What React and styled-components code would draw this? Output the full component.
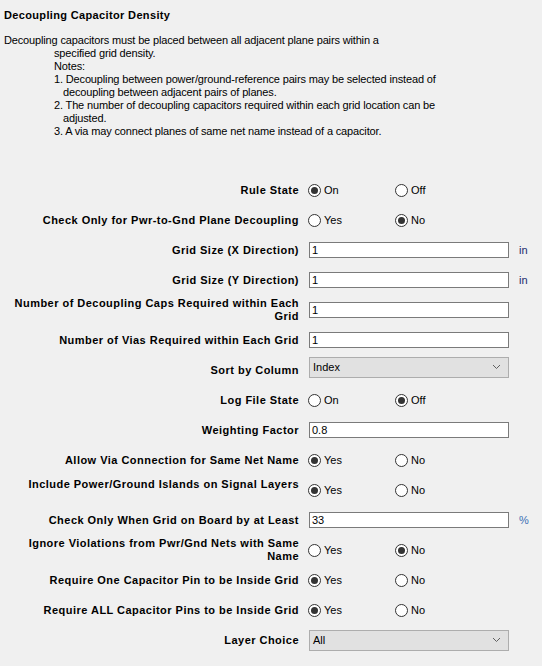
import React from "react";
import styled, { createGlobalStyle } from "styled-components";

const GlobalStyle = createGlobalStyle`
  html, body {
    margin: 0;
    padding: 0;
    background: #f0f0f0;
  }
  body {
    font-family: "Liberation Sans", Arial, sans-serif;
    font-size: 11px;
    color: #000;
  }
`;

const descLines = [
  { text: "Decoupling capacitors must be placed between all adjacent plane pairs within a", indent: 0 },
  { text: "specified grid density.", indent: 50 },
  { text: "Notes:", indent: 50 },
  { text: "1. Decoupling between power/ground-reference pairs may be selected instead of", indent: 50 },
  { text: "decoupling between adjacent pairs of planes.", indent: 59 },
  { text: "2. The number of decoupling capacitors required within each grid location can be", indent: 50 },
  { text: "adjusted.", indent: 59 },
  { text: "3. A via may connect planes of same net name instead of a capacitor.", indent: 50 },
];

const rules = [
  { label: "Rule State", type: "radio", options: ["On", "Off"], value: 0 },
  { label: "Check Only for Pwr-to-Gnd Plane Decoupling", type: "radio", options: ["Yes", "No"], value: 1 },
  { label: "Grid Size (X Direction)", type: "text", value: "1", unit: "in" },
  { label: "Grid Size (Y Direction)", type: "text", value: "1", unit: "in" },
  { label: "Number of Decoupling Caps Required within Each Grid", type: "text", value: "1" },
  { label: "Number of Vias Required within Each Grid", type: "text", value: "1" },
  { label: "Sort by Column", type: "select", value: "Index", shift: -3 },
  { label: "Log File State", type: "radio", options: ["On", "Off"], value: 1 },
  { label: "Weighting Factor", type: "text", value: "0.8" },
  { label: "Allow Via Connection for Same Net Name", type: "radio", options: ["Yes", "No"], value: 0 },
  { label: "Include Power/Ground Islands on Signal Layers", type: "radio", options: ["Yes", "No"], value: 0, top: true },
  { label: "Check Only When Grid on Board by at Least", type: "text", value: "33", unit: "%" },
  { label: "Ignore Violations from Pwr/Gnd Nets with Same Name", type: "radio", options: ["Yes", "No"], value: 1 },
  { label: "Require One Capacitor Pin to be Inside Grid", type: "radio", options: ["Yes", "No"], value: 0 },
  { label: "Require ALL Capacitor Pins to be Inside Grid", type: "radio", options: ["Yes", "No"], value: 0 },
  { label: "Layer Choice", type: "select", value: "All", shift: 0 },
];

const Chevron = () => (
  <svg width="9" height="6" viewBox="0 0 9 6">
    <polyline points="1,1 4.5,4.5 8,1" fill="none" stroke="#606060" strokeWidth="1" />
  </svg>
);

const RuleControl = ({ rule }) => {
  if (rule.type === "radio") {
    return (
      <RadioGroup>
        {rule.options.map((opt, i) => (
          <RadioOption key={opt}>
            <RadioCircle checked={i === rule.value} />
            <span>{opt}</span>
          </RadioOption>
        ))}
      </RadioGroup>
    );
  }
  if (rule.type === "select") {
    return (
      <Select shift={rule.shift}>
        <span>{rule.value}</span>
        <Chevron />
      </Select>
    );
  }
  return <TextBox>{rule.value}</TextBox>;
};

const App = () => {
  return (
    <Page>
      <GlobalStyle />
      <Header>
        <Title>Decoupling Capacitor Density</Title>
        <Description>
          {descLines.map((line) => (
            <DescLine key={line.text} indent={line.indent}>
              {line.text}
            </DescLine>
          ))}
        </Description>
      </Header>
      <Form>
        {rules.map((rule) => (
          <React.Fragment key={rule.label}>
            <Label top={rule.top}>{rule.label}</Label>
            <RuleControl rule={rule} />
            <Unit percent={rule.unit === "%"}>{rule.unit}</Unit>
          </React.Fragment>
        ))}
      </Form>
    </Page>
  );
};

const Page = styled.div`
  width: 542px;
  height: 666px;
  background: #f0f0f0;
  overflow: hidden;
`;

const Header = styled.div`
  padding: 9px 0 0 4px;
`;

const Title = styled.div`
  font-weight: bold;
  letter-spacing: 0.35px;
  line-height: 13px;
`;

const Description = styled.div`
  margin-top: 12px;
  line-height: 13px;
  letter-spacing: -0.15px;
`;

const DescLine = styled.div`
  padding-left: ${(p) => p.indent}px;
  white-space: nowrap;
`;

const Form = styled.div`
  display: grid;
  grid-template-columns: 290px 200px auto;
  grid-auto-rows: 30px;
  column-gap: 10px;
  align-items: center;
  padding-left: 9px;
  margin-top: 37px;
`;

const Label = styled.div`
  font-weight: bold;
  letter-spacing: 0.47px;
  line-height: 13px;
  text-align: right;
  align-self: ${(p) => (p.top ? "start" : "center")};
  padding-top: ${(p) => (p.top ? "3px" : "0")};
`;

const RadioGroup = styled.div`
  display: flex;
  margin-left: -1px;
`;

const RadioOption = styled.label`
  display: flex;
  align-items: center;
  gap: 3px;
  width: 87px;
  line-height: 13px;
`;

const RadioCircle = styled.span`
  position: relative;
  width: 13px;
  height: 13px;
  box-sizing: border-box;
  border: 1px solid #333;
  border-radius: 50%;
  background: #fff;
  &::after {
    content: "";
    display: ${(p) => (p.checked ? "block" : "none")};
    position: absolute;
    left: 2px;
    top: 2px;
    width: 7px;
    height: 7px;
    border-radius: 50%;
    background: #333;
  }
`;

const TextBox = styled.div`
  height: 16px;
  box-sizing: border-box;
  border: 1px solid #7a7a7a;
  background: #fff;
  padding: 0 2px;
  line-height: 14px;
`;

const Select = styled.div`
  display: flex;
  align-items: center;
  justify-content: space-between;
  height: 21px;
  box-sizing: border-box;
  border: 1px solid #adadad;
  background: #e1e1e1;
  padding: 0 7px 0 3px;
  margin-top: ${(p) => p.shift * 2}px;
`;

const Unit = styled.div`
  color: ${(p) => (p.percent ? "#3b6fb5" : "#1a2a6c")};
`;

export default App;
